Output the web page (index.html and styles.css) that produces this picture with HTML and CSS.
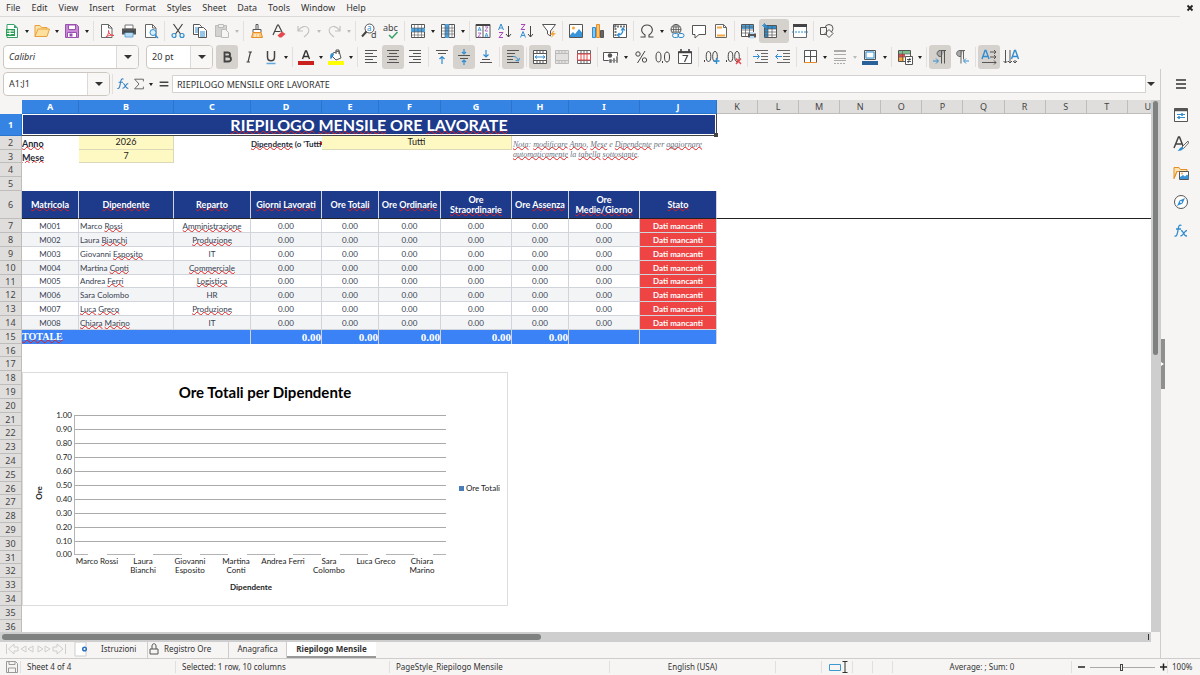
FILE: index.html
```html
<!DOCTYPE html>
<html lang="it">
<head>
<meta charset="utf-8">
<title>Riepilogo Mensile</title>
<link rel="stylesheet" href="styles.css">
</head>
<body>
<header class="menubar">
  <nav class="menus">
    <button>File</button><button>Edit</button><button>View</button><button>Insert</button><button>Format</button><button>Styles</button><button>Sheet</button><button>Data</button><button>Tools</button><button>Window</button><button>Help</button>
  </nav>
  <button class="close" aria-label="Close document"><svg viewBox="0 0 8 8"><path d="M1.500 1.500l5 5M6.500 1.500l-5 5" stroke="#222" stroke-width="1.800"/></svg></button>
</header>

<div class="toolbar" role="toolbar" aria-label="Standard">
  <button class="tool" aria-label="New"><svg viewBox="0 0 16 16"><path d="M3 1.500h7l3.500 3.500v9.500H3z" fill="#fff" stroke="#38a169"/><path d="M10 1.500v3.500h3.500z" fill="#38a169"/><path d="M2 6h9v7H2z" fill="#2f9e56"/><path d="M3 8h7M3 10.500h7M6 7v5" stroke="#fff"/></svg></button><button class="drop" aria-label="New options"></button>
  <button class="tool" aria-label="Open"><svg viewBox="0 0 16 16"><path d="M1 13.500V2.500h5l1.500 2H13v2" fill="#fbe0a8" stroke="#e9a23b"/><path d="M1 13.500l3-7.500h11.500l-2.500 7.500z" fill="#fddf9e" stroke="#e9a23b"/></svg></button><button class="drop" aria-label="Recent files"></button>
  <button class="tool" aria-label="Save"><svg viewBox="0 0 16 16"><path d="M1.500 1.500h11l2 2v11h-13z" fill="#c88ad6" stroke="#9b4fb0"/><path d="M4.500 2h7v4.500h-7z" fill="#fff" stroke="#9b4fb0"/><path d="M3.500 9.500h9v5h-9z" fill="#fff" stroke="#9b4fb0"/><path d="M5.500 10.500h3v3h-3z" fill="#9b4fb0"/></svg></button><button class="drop" aria-label="Save options"></button>
  <i class="sep"></i>
  <button class="tool" aria-label="Export PDF"><svg viewBox="0 0 16 16"><path d="M2.500 1.500h7l3.500 3.500v9.500H2.500z" fill="#fff" stroke="#666"/><path d="M9.500 1.500V5H13" fill="none" stroke="#666"/><path d="M7 14c2-2 3-4 2.500-6.500 0 3 2 5 5.500 5-3-1-5.500 0-8 1.500z" fill="#fff" stroke="#e5484d"/></svg></button>
  <button class="tool" aria-label="Print"><svg viewBox="0 0 16 16"><path d="M4 2h8v4H4z" fill="#fff" stroke="#777"/><path d="M1 5.500h14v6H1z" fill="#555"/><path d="M4 9h8v5H4z" fill="#b8dcf5" stroke="#6aa7d6"/><path d="M3 9h10" stroke="#222"/></svg></button>
  <button class="tool" aria-label="Print preview"><svg viewBox="0 0 16 16"><path d="M2.500 1.500h7l3.500 3.500v9.500H2.500z" fill="#fff" stroke="#666"/><path d="M9.500 1.500V5H13" fill="none" stroke="#666"/><circle cx="10" cy="9.500" r="3" fill="#d9edfa" stroke="#2f8dd0"/><path d="M12 12l3 3" stroke="#2f8dd0" stroke-width="1.500"/></svg></button>
  <i class="sep"></i>
  <button class="tool" aria-label="Cut"><svg viewBox="0 0 16 16" fill="none"><path d="M3.500 1l7 10M12.500 1l-7 10" stroke="#444" stroke-width="1.200"/><circle cx="4" cy="12.500" r="2" stroke="#2f8dd0" stroke-width="1.200"/><circle cx="12" cy="12.500" r="2" stroke="#2f8dd0" stroke-width="1.200"/></svg></button>
  <button class="tool" aria-label="Copy"><svg viewBox="0 0 16 16"><path d="M1.500 1.500h6l2 2v8h-8z" fill="#fff" stroke="#555"/><path d="M3 5h5M3 7h5M3 9h5" stroke="#2f8dd0"/><path d="M6.500 4.500h5l3 3v7h-8z" fill="#fff" stroke="#555"/><path d="M8 9h5M8 11h5M8 13h5" stroke="#2f8dd0"/></svg></button>
  <button class="tool" aria-label="Paste" disabled><svg viewBox="0 0 16 16"><path d="M1.500 2.500h11v11h-11z" fill="#d4d2d0" stroke="#bbb"/><path d="M4.500 1.500h5v3h-5z" fill="#eee" stroke="#bbb"/><path d="M7.500 6.500h4l3 3v5h-7z" fill="#f6f5f4" stroke="#bbb"/></svg></button><button class="drop" aria-label="Paste options" disabled></button>
  <i class="sep"></i>
  <button class="tool" aria-label="Clone formatting"><svg viewBox="0 0 16 16"><path d="M7 1.500h2v5H7z" fill="#fff" stroke="#555"/><path d="M4 6.500h8v3H4z" fill="#fff" stroke="#555"/><path d="M4 9.500h8l1.500 5h-11z" fill="#fbc67b" stroke="#e58e26"/><path d="M6 11v3M9 11v3" stroke="#fff"/></svg></button>
  <button class="tool" aria-label="Clear formatting"><svg viewBox="0 0 16 16"><path d="M2 12L6.500 2h1L11 9M3.500 8.500h6" fill="none" stroke="#444" stroke-width="1.200"/><path d="M6.500 12.500l4.500-4 3.500 2.500-4 3.500h-2z" fill="#e5484d"/></svg></button>
  <i class="gap"></i>
  <button class="tool" aria-label="Undo" disabled><svg viewBox="0 0 16 16" fill="none" stroke="#c4c2c0" stroke-width="1.200"><path d="M2 3v5h5M2.500 7.500C5 3 10 2.500 12 5c2.500 3 0 6-4 9"/></svg></button><button class="drop" aria-label="Undo list" disabled></button>
  <button class="tool" aria-label="Redo" disabled><svg viewBox="0 0 16 16" fill="none" stroke="#c4c2c0" stroke-width="1.200"><path d="M14 3v5H9M13.500 7.500C11 3 6 2.500 4 5c-2.500 3 0 6 4 9"/></svg></button><button class="drop" aria-label="Redo list" disabled></button>
  <i class="sep"></i>
  <button class="tool" aria-label="Find and replace"><svg viewBox="0 0 16 16"><circle cx="8.500" cy="5.500" r="4.500" fill="#fff" stroke="#555"/><path d="M5.500 8.500L1 13.500" stroke="#444" stroke-width="2"/><text x="6" y="8" class="glyph glyph--blue">a</text><text x="10" y="15" class="glyph">d</text></svg></button>
  <button class="tool" aria-label="Spelling"><svg viewBox="0 0 16 16"><text x="0" y="8" class="glyph">abc</text><path d="M6 12l3 3 5.500-6" fill="none" stroke="#38a169" stroke-width="1.500"/></svg></button>
  <i class="sep"></i>
  <button class="tool" aria-label="Row"><svg viewBox="0 0 16 16"><path d="M1.500 1.500h13v13h-13z" fill="#fff" stroke="#555"/><path d="M1 5h14v4H1z" fill="#4da3e0"/><path d="M4.500 2v12M8 2v12M11.500 2v12M2 5h12M2 9h12M2 12h12" stroke="#555" stroke-width=".6"/></svg></button><button class="drop" aria-label="Row options"></button>
  <button class="tool" aria-label="Column"><svg viewBox="0 0 16 16"><path d="M1.500 1.500h13v13h-13z" fill="#fff" stroke="#555"/><path d="M5 1h4v14H5z" fill="#4da3e0"/><path d="M5 2v12M9 2v12M12 2v12M2 5h12M2 8h12M2 11h12" stroke="#555" stroke-width=".6"/></svg></button><button class="drop" aria-label="Column options"></button>
  <i class="sep"></i>
  <button class="tool" aria-label="Sort"><svg viewBox="0 0 16 16"><path d="M1 1.500h14v13H1zM8 2v12" fill="#fff" stroke="#555"/><path d="M1 2h14" stroke="#444" stroke-width="2"/><g stroke-width=".8" fill="none"><path d="M3 8l1.500-4L6 8M10 14l1.500-4 1.500 4M3.500 7h2M10.500 13h2" stroke="#2f8dd0"/><path d="M3 10h3l-3 4h3M10 4h3l-3 4h3" stroke="#a347ba"/></g></svg></button>
  <button class="tool" aria-label="Sort ascending"><svg viewBox="0 0 16 16" fill="none"><path d="M1.500 7L4 1l2.500 6M2.500 5h3" stroke="#2f8dd0"/><path d="M2 9.500h4l-4 5h4" stroke="#a347ba"/><path d="M11.500 3v11M9 11l2.500 3 2.500-3" stroke="#444"/></svg></button>
  <button class="tool" aria-label="Sort descending"><svg viewBox="0 0 16 16" fill="none"><path d="M1.500 14.500L4 8.500l2.500 6M2.500 12.500h3" stroke="#2f8dd0"/><path d="M2 1.500h4l-4 5h4" stroke="#a347ba"/><path d="M11.500 3v11M9 11l2.500 3 2.500-3" stroke="#444"/></svg></button>
  <button class="tool" aria-label="AutoFilter"><svg viewBox="0 0 16 16"><path d="M1.500 1.500h13L9.500 8v5l-3-2V8z" fill="#fff" stroke="#555"/><path d="M12 8l-3 4h2.500L10 15l5-5h-3l1.500-2z" fill="#f5a742"/></svg></button>
  <i class="sep"></i>
  <button class="tool" aria-label="Image"><svg viewBox="0 0 16 16"><path d="M1.500 1.500h13v13h-13z" fill="#fff" stroke="#555"/><circle cx="5.500" cy="5" r="1.500" fill="#f5a742"/><path d="M2 14v-2l3-3 2 2 4-5 3 3.500V14z" fill="#3a94d8"/></svg></button>
  <button class="tool" aria-label="Chart"><svg viewBox="0 0 16 16"><path d="M2.500 4.500h3v10h-3z" fill="#8cc6ee" stroke="#2f8dd0"/><path d="M6.500 1.500h3v13h-3z" fill="#fbc67b" stroke="#e58e26"/><path d="M10.500 7.500h3v7h-3z" fill="#666" stroke="#555"/></svg></button>
  <button class="tool" aria-label="Pivot table"><svg viewBox="0 0 16 16"><path d="M1.500 1.500h13v13h-13z" fill="#fff" stroke="#555"/><path d="M2 3.500h12M3.500 2v12" stroke="#777" stroke-width="2" stroke-dasharray="2 1"/><path d="M6 12c4 0 5-2 5-6M9 7.500L11 5l2 2.500M7.500 10L5.500 12l2 2" fill="none" stroke="#2f8dd0" stroke-width="1.200"/></svg></button>
  <i class="sep"></i>
  <button class="tool" aria-label="Special character"><svg viewBox="0 0 16 16"><path d="M1.500 14H6v-2C0 8 3 2 8 2s8 6 2 10v2h4.500" fill="none" stroke="#444" stroke-width="1.100"/></svg></button><button class="drop" aria-label="More characters"></button>
  <button class="tool" aria-label="Hyperlink"><svg viewBox="0 0 16 16" fill="none"><circle cx="7" cy="6.500" r="5" stroke="#555"/><path d="M7 1.500v10M2 6.500h10M3 4h8M3 9h8" stroke="#555" stroke-width=".8"/><ellipse cx="7" cy="6.500" rx="2.500" ry="5" stroke="#555" stroke-width=".8"/><path d="M4 10h11v5H4z" fill="#f6f5f4"/><rect x="3.500" y="10.500" width="6" height="4" rx="2" stroke="#2f8dd0"/><rect x="9" y="10.500" width="6" height="4" rx="2" stroke="#2f8dd0"/></svg></button>
  <button class="tool" aria-label="Comment"><svg viewBox="0 0 16 16"><path d="M1.500 2.500h13v9H8l-4 3.500v-3.500H1.500z" fill="#fff" stroke="#555"/></svg></button>
  <button class="tool" aria-label="Headers and footers"><svg viewBox="0 0 16 16"><path d="M2.500 1.500h8l3 3v10h-11z" fill="#fff" stroke="#666"/><path d="M10.500 1.500v3h3" fill="none" stroke="#666"/><path d="M4 3.500h5v2H4zM4 11.500h8v2H4z" fill="#f5a742"/></svg></button>
  <i class="sep"></i>
  <button class="tool" aria-label="Print area"><svg viewBox="0 0 16 16"><path d="M1.500 1.500h12v12h-12z" fill="#fff" stroke="#555"/><path d="M2 2h11v4H2z" fill="#4da3e0"/><path d="M5.500 2v12M9.500 2v12M2 4h12M2 7h12M2 10h12" stroke="#555" stroke-width=".7"/><path d="M8 10.500h8v4H8z" fill="#555"/><path d="M10 9h4v2h-4zM10 13h4v2.500h-4z" fill="#b8dcf5"/></svg></button>
  <span class="toggle"><button class="tool" aria-label="Freeze rows and columns" aria-pressed="true"><svg viewBox="0 0 16 16"><path d="M2.500 2.500h12v12h-12z" fill="#fff" stroke="#555"/><path d="M3 3h11v3H3zM3 3h3v11H3z" fill="#2f8dd0"/><path d="M6 2v12M10 2v12M2 6h12M2 9h12M2 12h12" stroke="#555" stroke-width=".7"/><path d="M2.500 0v5M0 2.500h5M1 1l3 3M4 1L1 4" stroke="#2f8dd0" stroke-width=".8"/></svg></button><button class="drop" aria-label="Freeze options"></button></span>
  <button class="tool" aria-label="Split window"><svg viewBox="0 0 16 16"><path d="M1.500 1.500h13v13h-13z" fill="#fff" stroke="#666"/><path d="M1 2.500h14" stroke="#444" stroke-width="3"/><path d="M0 9h16" stroke="#2f8dd0" stroke-dasharray="2 1"/></svg></button>
  <i class="sep"></i>
  <button class="tool" aria-label="Draw functions"><svg viewBox="0 0 16 16" fill="#f6f5f4" stroke="#555"><circle cx="10" cy="5.500" r="4"/><path d="M1.500 4.500h6v7h-6zM10 6.500l4 4-4 4-4-4z"/></svg></button>
</div>

<div class="toolbar toolbar--format" role="toolbar" aria-label="Formatting">
  <div class="combo combo--font"><input type="text" aria-label="Font name" value="Calibri"><button aria-label="Font list"></button></div>
  <div class="combo combo--size"><input type="text" aria-label="Font size" value="20 pt"><button aria-label="Size list"></button></div>
  <button class="tool is-on" aria-label="Bold"><svg viewBox="0 0 16 16"><path d="M5.500 3.500h3c3.500 0 3.500 4 0 4h-3zm0 4h3.500c4 0 4 5 0 5H5.500z" fill="none" stroke="#444" stroke-width="1.800"/></svg></button>
  <button class="tool" aria-label="Italic"><svg viewBox="0 0 16 16"><path d="M7.500 3H11M5.500 13H9M9.500 3l-2.500 10" stroke="#444" stroke-width="1.200"/></svg></button>
  <button class="tool" aria-label="Underline"><svg viewBox="0 0 16 16"><path d="M4.500 2v6c0 5 7 5 7 0V2" fill="none" stroke="#444" stroke-width="1.500"/><path d="M3.500 14.500h9" stroke="#62a8e0" stroke-width="1.500"/></svg></button><button class="drop" aria-label="Underline styles"></button>
  <i class="sep"></i>
  <button class="tool" aria-label="Font color"><svg viewBox="0 0 16 16"><path d="M4.500 10L7.500 2h1l3 8M5.500 7.500h5" fill="none" stroke="#333" stroke-width="1.400"/><path d="M0 12h16v4H0z" fill="#c9211e"/></svg></button><button class="drop" aria-label="Font colors"></button>
  <button class="tool" aria-label="Background color"><svg viewBox="0 0 16 16"><path d="M5 4l6-2 2 7-5 2-4-4z" fill="#fff" stroke="#555"/><path d="M8 5V1h3v4" fill="none" stroke="#555"/><path d="M5 4C2 4 2 7 2.500 10c2 0 1.500-3 3.500-4z" fill="#2f8dd0"/><path d="M0 12h16v4H0z" fill="#ff0"/></svg></button><button class="drop" aria-label="Background colors"></button>
  <i class="sep"></i>
  <button class="tool" aria-label="Align left"><svg viewBox="0 0 16 16" stroke="#555"><path d="M2 1.500h12M2 4.500h8M2 7.500h12M2 10.500h8M2 13.500h12"/></svg></button>
  <button class="tool is-on" aria-label="Center"><svg viewBox="0 0 16 16" stroke="#555"><path d="M2 1.500h12M4 4.500h8M2 7.500h12M4 10.500h8M2 13.500h12"/></svg></button>
  <button class="tool" aria-label="Align right"><svg viewBox="0 0 16 16" stroke="#555"><path d="M2 1.500h12M6 4.500h8M2 7.500h12M6 10.500h8M2 13.500h12"/></svg></button>
  <i class="sep"></i>
  <button class="tool" aria-label="Align top"><svg viewBox="0 0 16 16" fill="none"><path d="M2 1.500h12M4 4.500h8" stroke="#555"/><path d="M8 15V7.500M5.500 10L8 7.500l2.500 2.500" stroke="#2f8dd0" stroke-width="1.200"/></svg></button>
  <button class="tool is-on" aria-label="Center vertically"><svg viewBox="0 0 16 16" fill="none"><path d="M2 6.500h12M4 9.500h8" stroke="#555"/><path d="M8 0v5M6 3l2 2 2-2M8 16v-5M6 13l2-2 2 2" stroke="#2f8dd0" stroke-width="1.200"/></svg></button>
  <button class="tool" aria-label="Align bottom"><svg viewBox="0 0 16 16" fill="none"><path d="M2 13.500h12M4 10.500h8" stroke="#555"/><path d="M8 1v7M5.500 5.500L8 8l2.500-2.500" stroke="#2f8dd0" stroke-width="1.200"/></svg></button>
  <i class="sep"></i>
  <button class="tool is-on" aria-label="Wrap text"><svg viewBox="0 0 16 16" fill="none"><path d="M2 1.500h12M2 4.500h8M2 7.500h6M2 10.500h6M2 13.500h12" stroke="#555"/><path d="M8 7.500c3 0 4 1 5.500 4.500M10.500 11.500l3 .5 1-3" stroke="#2f8dd0"/></svg></button>
  <i class="sep"></i>
  <button class="tool is-on" aria-label="Merge and center"><svg viewBox="0 0 16 16"><path d="M1.500 1.500h13v13h-13zM1.500 4.500h13M1.500 11.500h13M5 1.500v3M8 1.500v3M11 1.500v3M5 11.500v3M8 11.500v3M11 11.500v3" fill="#fff" stroke="#555"/><path d="M3 8h10M5 6.500L3 8l2 1.500M11 6.500L13 8l-2 1.500" fill="none" stroke="#2f8dd0"/></svg></button>
  <button class="tool" aria-label="Merge cells" disabled><svg viewBox="0 0 16 16"><path d="M1.500 1.500h13v13h-13zM1.500 4.500h13M1.500 11.500h13M5 1.500v3M8 1.500v3M11 1.500v3M5 11.500v3M8 11.500v3M11 11.500v3" fill="#e3e1df" stroke="#bbb"/></svg></button>
  <button class="tool" aria-label="Unmerge cells"><svg viewBox="0 0 16 16"><path d="M1.500 1.500h13v13h-13zM1.500 4.500h13M1.500 11.500h13M5 1.500v3M8 1.500v3M11 1.500v3M5 11.500v3M8 11.500v3M11 11.500v3" fill="#fff" stroke="#666"/><path d="M1.500 5h13v6h-13zM5 5v6M8 5v6M11 5v6" fill="none" stroke="#e5484d"/></svg></button>
  <i class="sep"></i>
  <button class="tool" aria-label="Currency"><svg viewBox="0 0 16 16"><path d="M.500 3.500h14v8H.500z" fill="#fff" stroke="#555"/><circle cx="7" cy="6.500" r="2.200" fill="#555"/><path d="M6 14v-4h3v4zM10 14V9h2v5zM13 14V7h2v7z" fill="#666" stroke="#f6f5f4" stroke-width=".5"/></svg></button><button class="drop" aria-label="Currency formats"></button>
  <button class="tool" aria-label="Percent"><svg viewBox="0 0 16 16" fill="none" stroke="#444"><circle cx="5" cy="5" r="2.200"/><circle cx="11.500" cy="11" r="2.200"/><path d="M12 2L4.500 14"/></svg></button>
  <button class="tool" aria-label="Number"><svg viewBox="0 0 16 16" fill="none" stroke="#444"><ellipse cx="3.500" cy="8" rx="2.500" ry="5"/><ellipse cx="12" cy="8" rx="2.500" ry="5"/><path d="M7.500 12v2"/></svg></button>
  <button class="tool" aria-label="Date"><svg viewBox="0 0 16 16"><path d="M1.500 2.500h13v12h-13z" fill="#fff" stroke="#555"/><path d="M1 3.500h14M4 0v3M12 0v3" stroke="#444" stroke-width="1.600"/><path d="M5.500 6.500h5l-3 6.500" fill="none" stroke="#444" stroke-width="1.200"/></svg></button>
  <i class="sep"></i>
  <button class="tool" aria-label="Add decimal place"><svg viewBox="0 0 16 16" fill="none" stroke="#444"><path d="M.500 11v2"/><ellipse cx="4.500" cy="7.500" rx="2.300" ry="5"/><ellipse cx="11" cy="7.500" rx="2.300" ry="5"/><path d="M12.500 9v6M9.500 12h6" stroke="#2f8dd0" stroke-width="1.400"/></svg></button>
  <button class="tool" aria-label="Delete decimal place"><svg viewBox="0 0 16 16" fill="none" stroke="#444"><path d="M.500 11v2"/><ellipse cx="4.500" cy="7.500" rx="2.300" ry="5"/><ellipse cx="11" cy="7.500" rx="2.300" ry="5"/><path d="M10 9.500l5 5.500M15 9.500L10 15" stroke="#e5484d" stroke-width="1.400"/></svg></button>
  <i class="sep"></i>
  <button class="tool" aria-label="Increase indent"><svg viewBox="0 0 16 16" fill="none"><path d="M2 1.500h13M8 4.500h7M8 7.500h7M8 10.500h7M2 13.500h13" stroke="#666"/><path d="M0 7.500h6M4 5l2.500 2.500L4 10" stroke="#2f8dd0"/></svg></button>
  <button class="tool" aria-label="Decrease indent"><svg viewBox="0 0 16 16" fill="none"><path d="M2 1.500h13M8 4.500h7M8 7.500h7M8 10.500h7M2 13.500h13" stroke="#666"/><path d="M1 7.500h6M3 5L.500 7.500 3 10" stroke="#2f8dd0"/></svg></button>
  <i class="sep"></i>
  <button class="tool" aria-label="Borders"><svg viewBox="0 0 16 16"><path d="M2.500 1.500h12v12h-12zM8.500 1.500v12M2.500 7.500h12" fill="#fff" stroke="#555"/><path d="M2 13.500h13" stroke="#e58e26"/></svg></button><button class="drop" aria-label="Border choices"></button>
  <button class="tool" aria-label="Border style" disabled><svg viewBox="0 0 16 16" stroke="#aaa"><path d="M2 2h12" stroke-width="2"/><path d="M2 5.500h12"/><path d="M2 9.500h12M2 11.500h12"/><path d="M2 14.500h12" stroke-dasharray="2 1"/></svg></button><button class="drop" aria-label="Border styles" disabled></button>
  <button class="tool" aria-label="Border color"><svg viewBox="0 0 16 16"><path d="M2.500 1.500h11v9h-11z" fill="#d9edfa" stroke="#555"/><path d="M4 3h8v6H4z" fill="#fff" stroke="#2f8dd0"/><path d="M0 12h16v4H0z" fill="#2a6099"/></svg></button><button class="drop" aria-label="Border colors"></button>
  <i class="sep"></i>
  <button class="tool" aria-label="Conditional formatting"><svg viewBox="0 0 16 16"><path d="M1.500 1.500h12v11h-12z" fill="#fff" stroke="#555"/><path d="M2 2h11v3H2z" fill="#7fc28f"/><path d="M2 5h6v3H2z" fill="#e5484d"/><path d="M2 8h5v4H2z" fill="#f5a742"/><path d="M5.500 2v10M2 5h11M2 8h11" stroke="#555" stroke-width=".6"/><path d="M8.500 7.500h7v8h-7z" fill="#fff" stroke="#555"/><path d="M10 10.500h4M10 12.500h4M13 9l-2 5" stroke="#333" stroke-width=".8"/></svg></button><button class="drop" aria-label="Conditional options"></button>
  <i class="sep"></i>
  <button class="tool is-on" aria-label="Left-to-right"><svg viewBox="0 0 16 16"><path d="M13 1.500H8.500c-4.500 0-4.500 6 0 6h1z" fill="#aaa"/><path d="M14 1.500H8.500c-4.500 0-4.500 6 0 6h1M9.500 1.500v13M12.500 1.500v13" fill="none" stroke="#555"/><path d="M1 12h5M4 9.500L6.500 12 4 14.500" fill="none" stroke="#2f8dd0"/></svg></button>
  <button class="tool" aria-label="Right-to-left"><svg viewBox="0 0 16 16"><path d="M9 1.500H6c-4.500 0-4.500 6 0 6h1z" fill="#aaa"/><path d="M11 1.500H6c-4.500 0-4.500 6 0 6h1M7 1.500v13M9.500 1.500v9" fill="none" stroke="#666"/><path d="M10 12h5M12 9.500L9.500 12l2.500 2.500" fill="none" stroke="#2f8dd0"/></svg></button>
  <i class="sep"></i>
  <button class="tool is-on" aria-label="Text direction horizontal"><svg viewBox="0 0 16 16" fill="none"><path d="M1 10l3-8.500h1L8 10M2 7.500h5" stroke="#2f8dd0" stroke-width="1.400"/><path d="M9 3h6M9 8h6M1 13.500h14M13 1l2 2-2 2M13 6l2 2-2 2M13 11.500l2 2-2 2" stroke="#555"/></svg></button>
  <button class="tool" aria-label="Text direction vertical"><svg viewBox="0 0 16 16" fill="none"><path d="M8.500 10l3-8.500h1l3 8.500M9.500 7.500h5" stroke="#2f8dd0" stroke-width="1.400"/><path d="M2.500 1v13M7 1v13M12 11v3M.500 12l2 2 2-2M5 12l2 2 2-2M10 12l2 2 2-2" stroke="#555"/></svg></button>
</div>

<div class="workspace">
  <main class="document">
    <div class="formulabar">
      <div class="combo combo--name"><input type="text" aria-label="Name box" value="A1:J1"><button aria-label="Named ranges"></button></div>
      <i class="sep"></i>
      <button class="fn" aria-label="Function wizard"><svg viewBox="0 0 16 16" fill="none" stroke="#2f7fc4" stroke-width="1.200"><path d="M8.500 2.500C6 1 5.500 4 5 7s-1 7-3.500 6M3 6h5"/><path d="M8 7.500c3 0 2 6 6 5.500M14 7.500c-3 0-3 5-6.500 5.500"/></svg></button>
      <button class="fn" aria-label="Select function"><svg viewBox="0 0 16 16"><path d="M13 5V2.500H3L8 8l-5 5.500h10V11" fill="none" stroke="#555"/></svg></button>
      <button class="drop" aria-label="Functions"></button>
      <button class="fn fn--last" aria-label="Formula"><svg viewBox="0 0 16 16"><path d="M3 6h10M3 10h10" stroke="#444" stroke-width="1.500"/></svg></button>
      <input class="formula" type="text" aria-label="Input line" value="RIEPILOGO MENSILE ORE LAVORATE">
      <button class="drop drop--big" aria-label="Expand formula bar"></button>
    </div>
    <div class="viewport">
      <div class="sheet">
        <table class="grid">
          <colgroup><col class="w-head"><col class="w57"><col class="w95"><col class="w77"><col class="w71"><col class="w57"><col class="w62"><col class="w71"><col class="w57"><col class="w71"><col class="w77"><col span="11"></colgroup>
          <thead><tr><td class="corner"></td><th class="sel">A</th><th class="sel">B</th><th class="sel">C</th><th class="sel">D</th><th class="sel">E</th><th class="sel">F</th><th class="sel">G</th><th class="sel">H</th><th class="sel">I</th><th class="sel">J</th><th>K</th><th>L</th><th>M</th><th>N</th><th>O</th><th>P</th><th>Q</th><th>R</th><th>S</th><th>T</th><th>U</th></tr></thead>
          <tbody>
            <tr class="r-title"><th class="sel">1</th><td colspan="10" class="title"><u>RIEPILOGO</u> <u>MENSILE</u> ORE <u>LAVORATE</u><i class="handle"></i></td></tr>
            <tr><th>2</th><td class="label"><u>Anno</u></td><td class="param">2026</td><td></td><td class="label label--cut"><u>Dipendente</u> (o 'Tutti')</td><td colspan="3" class="param">Tutti</td><td colspan="3" rowspan="2" class="note"><u>Nota</u>: <u>modificare</u> <u>Anno</u>, <u>Mese</u> e <u>Dipendente</u> per <u>aggiornare</u> <u>automaticamente</u> la <u>tabella</u> <u>sottostante</u>.</td></tr>
            <tr class="r-short"><th>3</th><td class="label"><u>Mese</u></td><td class="param">7</td></tr>
            <tr><th>4</th></tr>
            <tr><th>5</th></tr>
            <tr class="r-head"><th>6</th><td><u>Matricola</u></td><td><u>Dipendente</u></td><td><u>Reparto</u></td><td><u>Giorni</u> <u>Lavorati</u></td><td>Ore <u>Totali</u></td><td>Ore <u>Ordinarie</u></td><td>Ore <u>Straordinarie</u></td><td>Ore <u>Assenza</u></td><td>Ore <u>Medie/Giorno</u></td><td><u>Stato</u></td><td class="frozen" colspan="11"></td></tr>
            <tr class="data"><th>7</th><td>M001</td><td>Marco <u>Rossi</u></td><td><u>Amministrazione</u></td><td>0.00</td><td>0.00</td><td>0.00</td><td>0.00</td><td>0.00</td><td>0.00</td><td>Dati mancanti</td></tr>
            <tr class="data alt"><th>8</th><td>M002</td><td>Laura <u>Bianchi</u></td><td><u>Produzione</u></td><td>0.00</td><td>0.00</td><td>0.00</td><td>0.00</td><td>0.00</td><td>0.00</td><td>Dati mancanti</td></tr>
            <tr class="data"><th>9</th><td>M003</td><td>Giovanni <u>Esposito</u></td><td>IT</td><td>0.00</td><td>0.00</td><td>0.00</td><td>0.00</td><td>0.00</td><td>0.00</td><td>Dati mancanti</td></tr>
            <tr class="data alt"><th>10</th><td>M004</td><td>Martina <u>Conti</u></td><td><u>Commerciale</u></td><td>0.00</td><td>0.00</td><td>0.00</td><td>0.00</td><td>0.00</td><td>0.00</td><td>Dati mancanti</td></tr>
            <tr class="data r-short"><th>11</th><td>M005</td><td>Andrea <u>Ferri</u></td><td><u>Logistica</u></td><td>0.00</td><td>0.00</td><td>0.00</td><td>0.00</td><td>0.00</td><td>0.00</td><td>Dati mancanti</td></tr>
            <tr class="data alt"><th>12</th><td>M006</td><td>Sara Colombo</td><td>HR</td><td>0.00</td><td>0.00</td><td>0.00</td><td>0.00</td><td>0.00</td><td>0.00</td><td>Dati mancanti</td></tr>
            <tr class="data"><th>13</th><td>M007</td><td><u>Luca</u> <u>Greco</u></td><td><u>Produzione</u></td><td>0.00</td><td>0.00</td><td>0.00</td><td>0.00</td><td>0.00</td><td>0.00</td><td>Dati mancanti</td></tr>
            <tr class="data alt"><th>14</th><td>M008</td><td><u>Chiara</u> <u>Marino</u></td><td>IT</td><td>0.00</td><td>0.00</td><td>0.00</td><td>0.00</td><td>0.00</td><td>0.00</td><td>Dati mancanti</td></tr>
            <tr class="total"><th>15</th><td colspan="3"><u>TOTALE</u></td><td>0.00</td><td>0.00</td><td>0.00</td><td>0.00</td><td>0.00</td><td></td><td></td></tr>
            <tr class="r-short"><th>16</th></tr>
            <tr><th>17</th></tr><tr><th>18</th></tr><tr><th>19</th></tr><tr><th>20</th></tr>
            <tr class="r-short"><th>21</th></tr>
            <tr><th>22</th></tr><tr><th>23</th></tr><tr><th>24</th></tr><tr><th>25</th></tr>
            <tr class="r-short"><th>26</th></tr>
            <tr><th>27</th></tr><tr><th>28</th></tr><tr><th>29</th></tr><tr><th>30</th></tr>
            <tr class="r-short"><th>31</th></tr>
            <tr><th>32</th></tr><tr><th>33</th></tr><tr><th>34</th></tr><tr><th>35</th></tr>
            <tr class="r-short"><th>36</th></tr>
          </tbody>
        </table>
        <svg class="chart" viewBox="0 0 486 234" role="img" aria-label="Ore Totali per Dipendente">
          <rect x="0.5" y="0.5" width="485" height="233" fill="#fff" stroke="#ddd"/>
          <text class="chart-title" x="243" y="26">Ore Totali per Dipendente</text>
          <path d="M52 43.500h372M52 57.500h372M52 71.500h372M52 85.500h372M52 99.500h372M52 113.500h372M52 127.500h372M52 141.500h372M52 155.500h372M52 169.500h372" stroke="#aaa"/>
          <path d="M52.500 43v140" stroke="#b3b3b3"/>
          <path d="M52 182.500h14M85 182.500h28M131 182.500h29M178 182.500h28M225 182.500h28M271 182.500h28M318 182.500h28M364 182.500h28M411 182.500h13" stroke="#b3b3b3"/>
          <g class="axis-y"><text x="50" y="46">1.00</text><text x="50" y="60">0.90</text><text x="50" y="74">0.80</text><text x="50" y="88">0.70</text><text x="50" y="102">0.60</text><text x="50" y="116">0.50</text><text x="50" y="130">0.40</text><text x="50" y="144">0.30</text><text x="50" y="158">0.20</text><text x="50" y="172">0.10</text><text x="50" y="185">0.00</text></g>
          <g class="axis-x"><text x="75" y="192">Marco Rossi</text><text x="121" y="192">Laura</text><text x="121" y="201">Bianchi</text><text x="168" y="192">Giovanni</text><text x="168" y="201">Esposito</text><text x="214" y="192">Martina</text><text x="214" y="201">Conti</text><text x="261" y="192">Andrea Ferri</text><text x="307" y="192">Sara</text><text x="307" y="201">Colombo</text><text x="354" y="192">Luca Greco</text><text x="400" y="192">Chiara</text><text x="400" y="201">Marino</text></g>
          <text class="axis-title" x="229" y="218">Dipendente</text>
          <text class="axis-title" transform="translate(20 121) rotate(-90)">Ore</text>
          <rect x="437" y="114" width="5" height="5" fill="#4a7ebb"/>
          <text class="legend" x="444" y="119">Ore Totali</text>
        </svg>
      </div>
      <div class="vscroll"><i></i></div>
    </div>
    <div class="hscroll"><i></i><b></b></div>
    <div class="tabs">
      <svg class="tabnav" viewBox="0 0 60 14" fill="none" stroke="#d0cecc"><path d="M.500 2v10M8 2L2.500 7 8 12v-3h4V5H8zM20 4l-5 3 5 3zM27 4l-5 3 5 3zM32 4l5 3-5 3zM39 4l5 3-5 3zM51 2l6 5-6 5v-3h-4V5h4zM59.500 2v10"/></svg>
      <button class="addtab" aria-label="Add sheet"><svg viewBox="0 0 14 16"><path d="M1 0h11v14H1z" fill="#fff" stroke="#d0cecc"/><circle cx="10.500" cy="7" r="1.800" fill="#fff" stroke="#2a6fc0" stroke-width="1.500"/></svg></button>
      <button class="tab tab--first">Istruzioni</button>
      <button class="tab tab--lock"><svg viewBox="0 0 10 12"><path d="M1 6h8v5H1zM3 6V3c0-3 4-3 4 0v3" fill="none" stroke="#555"/></svg>Registro Ore</button>
      <button class="tab tab--third">Anagrafica</button>
      <button class="tab tab--active">Riepilogo Mensile</button>
    </div>
  </main>
  <aside class="sidebar">
    <button class="settings" aria-label="Sidebar settings"><svg viewBox="0 0 16 16"><path d="M3 4h10M3 8h10M3 12h10" stroke="#333" stroke-width="1.600"/></svg></button>
    <button aria-label="Properties"><svg viewBox="0 0 16 16"><path d="M1.500 1.500h13v13h-13z" fill="#fff" stroke="#555"/><path d="M1 3h14" stroke="#555" stroke-width="2.500"/><path d="M4 7.500h8M4 10.500h8" stroke="#2f8dd0"/><path d="M9 6v3M6 9v3" stroke="#2f8dd0" stroke-width="1.500"/></svg></button>
    <button aria-label="Styles"><svg viewBox="0 0 16 16" fill="none"><path d="M1 12L5.500 1h1L10 10M2.500 8h6" stroke="#444" stroke-width="1.500"/><path d="M15 5L9 11l1.500 1.500L15.500 7z" fill="#fff" stroke="#666"/><path d="M4 15c2 0 2.500-4 5-4s2 4-5 4z" fill="#2f8dd0"/></svg></button>
    <button aria-label="Gallery"><svg viewBox="0 0 16 16"><path d="M1 13.500V2.500h5l1.500 2H14v2H4z" fill="#fde2b0" stroke="#e58e26"/><path d="M1 13.500L4 6" stroke="#e58e26"/><path d="M6.500 6.500h9v8h-9z" fill="#fff" stroke="#555"/><path d="M7 14v-2l3-2 2 1.500 2-2 1.500 1.500v3z" fill="#3a94d8"/><circle cx="9" cy="8.500" r="1" fill="#f5a742"/></svg></button>
    <button aria-label="Navigator"><svg viewBox="0 0 16 16"><circle cx="8" cy="8" r="6.500" fill="#fff" stroke="#555"/><path d="M12 4L9.500 9.500 4 12l2.500-5.500z" fill="#2f8dd0"/><circle cx="8" cy="8" r="1" fill="#fff"/></svg></button>
    <button aria-label="Functions"><svg viewBox="0 0 16 16" fill="none" stroke="#2f8dd0" stroke-width="1.300"><path d="M8.500 2.500C6 1 5.500 4 5 7s-1 7-3.500 6M3 6h5"/><path d="M8 7.500c3 0 2 6 6 5.500M14 7.500c-3 0-3 5-6.500 5.500"/></svg></button>
    <button class="collapse" aria-label="Hide sidebar"></button>
  </aside>
</div>

<footer class="status">
  <span class="cell cell--icon"><svg viewBox="0 0 12 12"><path d="M.500 .500h9l2 2v9H.500zM3 .500v3h6v-3M2.500 11.500V7h7v4.500" fill="none" stroke="#999"/></svg></span>
  <span class="cell">Sheet 4 of 4</span>
  <span class="cell">Selected: 1 row, 10 columns</span>
  <span class="cell">PageStyle_Riepilogo Mensile</span>
  <span class="cell cell--mid">English (USA)</span>
  <span class="cell"></span>
  <span class="cell cell--mode"><svg viewBox="0 0 24 12" fill="none"><path d="M1.500 3.500h11v6h-11z" stroke="#3d9ad1"/><path d="M14.500 .500h5M14.500 11.500h5M17 1v10" stroke="#333"/></svg></span>
  <span class="cell"></span>
  <span class="cell"></span>
  <span class="cell cell--mid">Average: ; Sum: 0</span>
  <span class="cell cell--zoom"><button aria-label="Zoom out"><svg viewBox="0 0 8 8"><path d="M0 4h7" stroke="#222" stroke-width="1.500"/></svg></button><input type="range" aria-label="Zoom" min="0" max="100" value="49"><button aria-label="Zoom in"><svg viewBox="0 0 8 8"><path d="M1 4h7M4.500 .500v7" stroke="#222" stroke-width="1.500"/></svg></button></span>
  <span class="cell cell--pct">100%</span>
</footer>
</body>
</html>
```
FILE: styles.css
```css
* { box-sizing: border-box; }
body {
  margin: 0;
  height: 100vh;
  display: flex;
  flex-direction: column;
  overflow: hidden;
  background: #f6f5f4;
  color: #333;
  font: 9px/12px "Noto Sans", sans-serif;
}
button, input { font: inherit; color: inherit; border: 0; padding: 0; margin: 0; background: none; }
svg { display: block; }

.menubar { display: flex; justify-content: space-between; height: 17px; flex: none; }
.menus { flex: 1; display: flex; gap: 11px; padding-left: 6px; margin-right: 4px; border-bottom: 1px solid #dcdad8; }
.close { width: 12px; height: 16px; padding: 2px; margin-right: 4px; }

.toolbar { display: flex; align-items: center; height: 28px; padding-left: 1px; flex: none; }
.toolbar--format { height: 24px; padding-left: 3px; }
.tool { width: 22px; height: 24px; padding: 4px 3px; border-radius: 3px; flex: none; }
.tool svg { width: 16px; height: 16px; overflow: visible; }
.is-on, .toggle { background: #d5d1cd; border-radius: 3px; }
.toggle { display: flex; align-items: center; }
.drop { width: 8px; height: 24px; display: grid; place-items: center; flex: none; }
.drop::after { content: ""; border: 2px solid transparent; border-top: 3px solid #222; border-bottom: 0; }
.drop:disabled::after { border-top-color: #bbb; }
.sep { width: 1px; height: 20px; margin: 0 2px; background: #e2e0de; flex: none; }
.gap { width: 3px; flex: none; }
.glyph { font: 9px "Noto Sans", sans-serif; fill: #444; }
.glyph--blue { fill: #2f8dd0; font-size: 8px; }

.combo { display: flex; height: 24px; border: 1px solid #cdc7c2; border-radius: 4px; background: #fff; overflow: hidden; flex: none; }
.combo input { flex: 1; min-width: 0; padding-left: 5px; }
.combo button { width: 22px; border-left: 1px solid #dcdad8; background: #f8f7f6; display: grid; place-items: center; }
.combo button::after, .drop--big::after { content: ""; border: 4px solid transparent; border-top: 4px solid #333; border-bottom: 0; }
.combo--font { width: 136px; margin-right: 7px; }
.combo--font input { font-style: italic; }
.combo--size { width: 67px; margin-right: 3px; }
.combo--name { width: 107px; }

.workspace { flex: 1; display: flex; min-height: 0; }
.document { flex: 1; min-width: 0; display: flex; flex-direction: column; border-right: 1px solid #cfcdcb; }
.formulabar { display: flex; align-items: center; height: 31px; padding: 0 4px 1px 3px; flex: none; }
.fn { width: 16px; height: 20px; padding: 3px 1px; }
.fn svg { width: 14px; height: 14px; }
.fn--last { margin: 0 0 0 1px; }
.formula { flex: 1; height: 18px; padding: 0 4px; border: 1px solid #d5d3d1; background: #fff; }
.drop--big { width: 10px; }

.viewport { flex: 1; display: flex; min-height: 0; }
.sheet { flex: 1; position: relative; overflow: hidden; background: #fff; }
.vscroll { width: 9px; background: #cecece; padding: 1px 2px; }
.vscroll i { display: block; height: 48%; background: #7f8180; border-radius: 3px; }
.hscroll { display: flex; justify-content: space-between; align-items: center; height: 10px; margin-right: 9px; padding: 2px; background: #cecece; flex: none; }
.hscroll i { width: 47%; height: 6px; background: #7f8180; border-radius: 3px; }
.hscroll b { width: 1px; height: 6px; background: #333; }

.grid { width: calc(100% + 18px); table-layout: fixed; border-collapse: separate; border-spacing: 0; font: 9px/12px Lato, sans-serif; }
.w-head { width: 22px; }
.w57 { width: 57px; }
.w62 { width: 62px; }
.w71 { width: 71px; }
.w77 { width: 77px; }
.w95 { width: 95px; }
.grid tr { height: 14px; }
.grid td, .grid th { padding: 0; overflow: hidden; white-space: nowrap; }
.grid th { font: 9px/12px "Noto Sans", sans-serif; background: #e0dedd; border: solid #bfbdbb; border-width: 0 1px 1px 0; color: #444; }
.grid .sel { background: #3584e4; border-color: #2b74cc; color: #fff; font-weight: 700; }
.grid .corner { background: #f6f5f4; }
.grid .r-short { height: 13px; }
.grid .r-short th, .grid .r-short td { line-height: 11px; }
.grid .r-title { height: 22px; }
.grid .r-head { height: 28px; }
u { text-decoration: underline wavy #e02020 1px; text-decoration-skip-ink: none; text-underline-offset: -1px; }

.grid .title { position: relative; overflow: visible; text-align: center; background: #1e3a8a; color: #fff; font-size: 16px; line-height: 18px; font-weight: 700; border: solid #444; border-width: 0 1px 1px 0; box-shadow: inset 0 0 0 1px #fff; }
.handle { position: absolute; right: -2px; bottom: -2px; width: 4px; height: 4px; background: #444; }
.grid .label { font-weight: 700; color: #1f2937; vertical-align: bottom; }
.grid .label--cut { font-size: 8px; background: linear-gradient(#e02020, #e02020) right center / 2px 3px no-repeat; }
.grid .param { background: #fef9c3; text-align: center; vertical-align: top; color: #222; border: solid #dcd9b8; border-width: 0 1px 1px 0; }
.grid .note { white-space: normal; vertical-align: middle; font: italic 8px/10px "Liberation Serif", serif; color: #6b7280; padding-left: 1px; }
.r-head td { text-align: center; background: #1e3a8a; color: #fff; font-weight: 700; line-height: 10px; border: solid #d1d5db; border-width: 0 1px 0 0; border-bottom: 1px solid #222; }
.grid .r-head td { white-space: normal; padding: 0 1px; }
.r-head .frozen { background: #fff; border-right: 0; }
.data td { text-align: center; color: #374151; border: solid #d1d5db; border-width: 0 1px 1px 0; font-size: 8px; }
.data td:nth-child(3) { text-align: left; padding-left: 1px; }
.alt td { background: #f3f4f6; }
.data td:last-child { background: #ef4444; color: #fff; font-weight: 700; }
.total td { background: #3b82f6; color: #fff; font: 700 11px/12px "Liberation Serif", serif; text-align: right; border-right: 1px solid #d1d5db; }
.total td:nth-child(2) { text-align: left; font-size: 10px; }

.chart { position: absolute; left: 22px; top: 272px; width: 486px; height: 234px; font: 8px Lato, sans-serif; fill: #222; }
.chart-title { font-size: 15px; font-weight: 700; text-anchor: middle; fill: #000; }
.axis-y { text-anchor: end; }
.axis-x, .axis-title { text-anchor: middle; }
.axis-title { font-weight: 700; }

.tabs { display: flex; height: 16px; padding-left: 6px; flex: none; font-size: 8px; }
.tabnav { width: 60px; height: 14px; }
.addtab { width: 14px; margin: 0 13px 0 8px; }
.tab { border-right: 1px solid #cfcdcb; padding-bottom: 2px; }
.tab svg { width: 10px; height: 12px; margin-right: 5px; }
.tab--first { width: 47px; text-align: left; }
.tab--lock { display: flex; align-items: center; width: 81px; padding-left: 1px; }
.tab--third { width: 58px; }
.tab--active { width: 89px; background: #fff; font-weight: 700; border-right: 0; border-bottom: 2px solid #999; padding: 0; }

.sidebar { position: relative; width: 39px; display: flex; flex-direction: column; align-items: center; gap: 13px; padding-top: 7px; }
.sidebar svg { width: 16px; height: 16px; }
.settings { margin-bottom: 2px; }
.collapse { position: absolute; left: 0; top: 50%; width: 4px; height: 50px; margin-top: -25px; background: #8f8f8f; }
.collapse::after { content: ""; display: block; border: 2px solid transparent; border-left: 3px solid #fff; border-right: 0; }

.status { display: grid; grid-template-columns: 21fr 155fr 214fr 220fr 166fr 46fr 31fr 20fr 20fr 179fr 96fr 32fr; height: 17px; flex: none; border-top: 1px solid #cfcdcb; align-items: center; font-size: 8px; }
.cell { min-width: 0; height: 12px; padding-left: 6px; border-right: 1px solid #e2e0de; white-space: nowrap; }
.cell:last-child { border: 0; }
.cell svg { height: 12px; }
.cell--icon svg { width: 12px; }
.cell--mid { text-align: center; padding: 0; }
.cell--mode svg { width: 24px; }
.cell--zoom { display: flex; align-items: center; gap: 4px; }
.cell--zoom svg { width: 8px; height: 8px; }
.cell--zoom input { flex: 1; min-width: 0; height: 8px; appearance: none; background: linear-gradient(#aaa, #aaa) center / 100% 1px no-repeat; }
.cell--zoom input::-webkit-slider-thumb { appearance: none; width: 3px; height: 7px; border: 1px solid #444; background: #f6f5f4; }
.cell--pct { padding-left: 4px; }
```
